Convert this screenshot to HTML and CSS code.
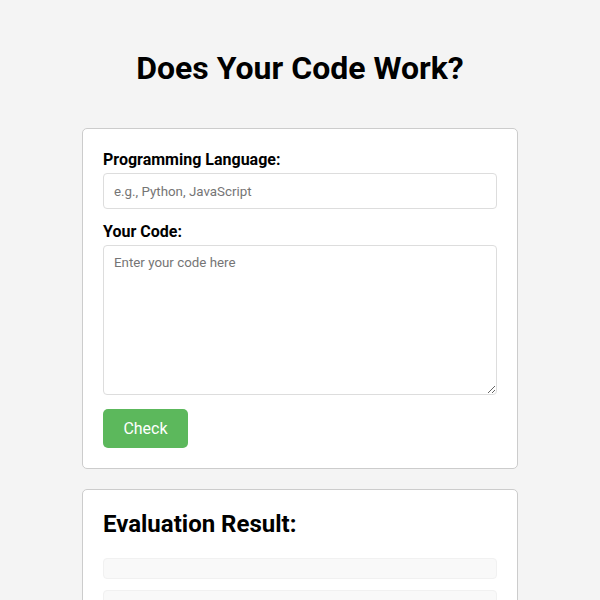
FILE: index.html
```html
<!DOCTYPE html>
<html lang="en">
<head>
<meta charset="utf-8">
<title>Does Your Code Work?</title>
<link rel="stylesheet" href="styles.css">
</head>
<body>
<main class="page">
  <h1 class="title">Does Your Code Work?</h1>
  <form class="card">
    <label class="label" for="lang">Programming Language:</label>
    <input class="field" id="lang" type="text" placeholder="e.g., Python, JavaScript">
    <label class="label" for="code">Your Code:</label>
    <textarea class="field area" id="code" placeholder="Enter your code here"></textarea>
    <button class="btn" type="button">Check</button>
  </form>
  <section class="card result">
    <h2 class="result-title">Evaluation Result:</h2>
    <div class="bar"></div>
    <div class="bar"></div>
  </section>
</main>
</body>
</html>
```
FILE: styles.css
```css
* { box-sizing: border-box; }
html, body { margin: 0; padding: 0; }
body {
  background: #f4f4f4;
  font-family: Roboto, "Liberation Sans", Arial, sans-serif;
  color: #000;
}
.page {
  width: 436px;
  margin: 0 auto;
  padding-top: 47px;
  display: flex;
  flex-direction: column;
  gap: 20px;
}
.title {
  margin: 0 0 19px;
  font-size: 32px;
  line-height: 42px;
  font-weight: 700;
  text-align: center;
}
.card {
  background: #fff;
  border: 1px solid #ccc;
  border-radius: 5px;
  padding: 20px;
  display: flex;
  flex-direction: column;
  align-items: flex-start;
}
.label {
  font-size: 16px;
  line-height: 21px;
  font-weight: 700;
  margin-bottom: 3px;
}
.field {
  width: 100%;
  height: 36px;
  border: 1px solid #ddd;
  border-radius: 4px;
  padding: 9px 10px;
  font-family: Roboto, "Liberation Sans", Arial, sans-serif;
  font-size: 13.333px;
  line-height: 16px;
  color: #000;
  margin: 0 0 12px;
  background: #fff;
}
.field::placeholder { color: #757575; }
.area {
  height: 150px;
  resize: vertical;
  margin-bottom: 14px;
}
.btn {
  background: #5cb85c;
  color: #fff;
  border: none;
  border-radius: 5px;
  width: 85px;
  height: 39px;
  font-family: Roboto, "Liberation Sans", Arial, sans-serif;
  font-size: 16px;
  padding: 0;
}
.result { align-items: stretch; }
.result-title {
  margin: 0 0 20px;
  font-size: 24px;
  line-height: 28px;
  font-weight: 700;
}
.bar {
  height: 21px;
  background: #f9f9f9;
  border: 1px solid #f1f1f1;
  border-radius: 4px;
  margin-bottom: 11px;
}
```
